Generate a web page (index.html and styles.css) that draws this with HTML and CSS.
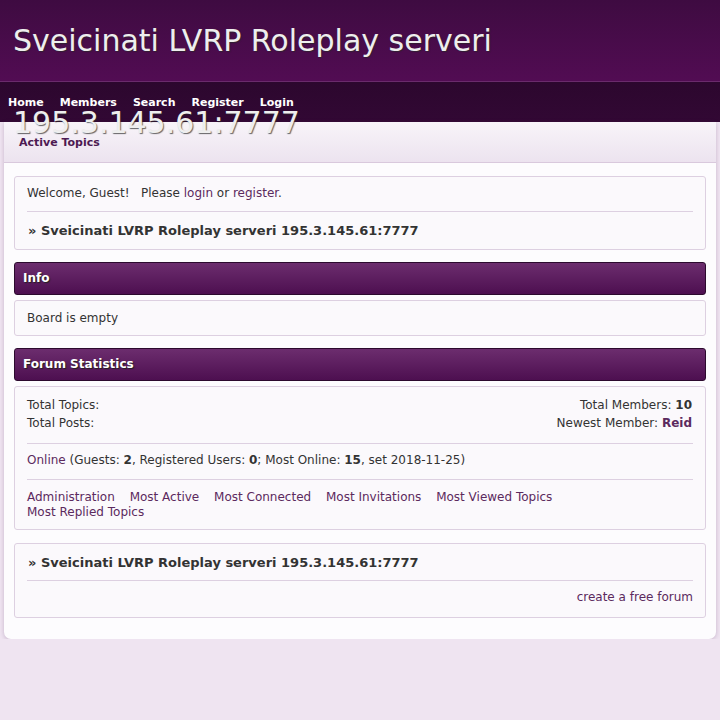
FILE: index.html
```html
<!DOCTYPE html>
<html>
<head>
<meta charset="utf-8">
<title>Sveicinati LVRP Roleplay serveri</title>
<link rel="stylesheet" href="styles.css">
</head>
<body>
<header class="site-header">
  <h1 class="site-title">Sveicinati LVRP Roleplay serveri 195.3.145.61:7777</h1>
</header>
<nav class="main-nav">
  <a href="#">Home</a>
  <a href="#">Members</a>
  <a href="#">Search</a>
  <a href="#">Register</a>
  <a href="#">Login</a>
</nav>
<div class="page">
  <div class="subnav"><a href="#">Active Topics</a></div>
  <div class="content">
    <section class="box welcome">
      <div class="row">Welcome, Guest!&nbsp;&nbsp; Please <a href="#">login</a> or <a href="#">register</a>.</div>
      <div class="row row-sep crumb">» Sveicinati LVRP Roleplay serveri 195.3.145.61:7777</div>
    </section>

    <h2 class="bar">Info</h2>
    <section class="box">
      <div class="row board">Board is empty</div>
    </section>

    <h2 class="bar">Forum Statistics</h2>
    <section class="box stats">
      <div class="stats-top">
        <div class="col">
          <div>Total Topics:</div>
          <div>Total Posts:</div>
        </div>
        <div class="col right">
          <div>Total Members: <b>10</b></div>
          <div>Newest Member: <a href="#" class="member">Reid</a></div>
        </div>
      </div>
      <div class="row row-sep online"><a href="#">Online</a> (Guests: <b>2</b>, Registered Users: <b>0</b>; Most Online: <b>15</b>, set 2018-11-25)</div>
      <div class="row row-sep links">
        <a href="#">Administration</a>
        <a href="#">Most Active</a>
        <a href="#">Most Connected</a>
        <a href="#">Most Invitations</a>
        <a href="#">Most Viewed Topics</a>
        <a href="#">Most Replied Topics</a>
      </div>
    </section>

    <section class="box footer-box">
      <div class="row crumb">» Sveicinati LVRP Roleplay serveri 195.3.145.61:7777</div>
      <div class="row row-sep right credit"><a href="#">create a free forum</a></div>
    </section>
  </div>
</div>
</body>
</html>
```
FILE: styles.css
```css
html, body {
  margin: 0;
  padding: 0;
}
body {
  background: #efe4f1;
  font-family: "DejaVu Sans", "Liberation Sans", sans-serif;
  font-size: 12px;
  color: #333;
}
a {
  color: #5c2a5e;
  text-decoration: none;
}
.site-header {
  height: 81px;
  background: linear-gradient(to bottom, #3e0b41, #520c53);
  border-bottom: 1px solid #6a2b6c;
}
.site-title {
  position: relative;
  z-index: 2;
  margin: 0;
  padding-left: 13px;
  font-size: 30px;
  line-height: 82px;
  font-weight: normal;
  color: #eeeeee;
  text-shadow: 1px 1px 1px rgba(40, 40, 40, 0.7);
}
.main-nav {
  height: 40px;
  background: linear-gradient(to bottom, #2c072e, #320834);
  display: flex;
  align-items: flex-start;
  padding-left: 8px;
  gap: 16px;
}
.main-nav a {
  color: #fff;
  font-weight: bold;
  font-size: 11px;
  line-height: 13px;
  margin-top: 14px;
}
.page {
  margin: 0 4px;
  background: #fdfcfe;
  border-radius: 0 0 7px 7px;
  box-shadow: 0 1px 4px rgba(80, 40, 90, 0.25);
  padding-bottom: 21px;
}
.subnav {
  height: 40px;
  background: linear-gradient(to bottom, #f8f4f9, #ece3ef);
  border-bottom: 1px solid #d9c9dd;
  padding-left: 15px;
}
.subnav a {
  display: inline-block;
  margin-top: 14px;
  font-weight: bold;
  font-size: 11px;
  line-height: 13px;
  color: #4d1a52;
}
.content {
  padding: 13px 10px 0;
}
.box {
  background: #fbf9fc;
  border: 1px solid #ddd0e1;
  border-radius: 3px;
  padding: 0 12px;
  margin-bottom: 12px;
}
.row {
  padding: 9px 0;
  line-height: 15px;
}
.row-sep {
  border-top: 1px solid #ddd0e1;
}
.welcome .row:first-child {
  padding-top: 9px;
  padding-bottom: 10px;
}
.crumb {
  font-weight: bold;
  font-size: 13px;
  color: #333;
  padding-left: 1px;
  padding-top: 11px;
  padding-bottom: 11px;
}
.board {
  padding-top: 10px;
  padding-bottom: 9px;
}
.bar {
  margin: 0 0 5px;
  height: 31px;
  line-height: 31px;
  padding-left: 8px;
  font-size: 12px;
  font-weight: bold;
  color: #fff;
  text-shadow: 1px 1px 1px #222;
  background: linear-gradient(to bottom, #6c2d6e, #4d0f50);
  border: 1px solid #2c0a2e;
  border-radius: 3px;
}
.stats-top {
  display: flex;
  justify-content: space-between;
  padding: 9px 1px 11px 0;
  line-height: 18px;
}
.right {
  text-align: right;
}
.member {
  font-weight: bold;
}
.online {
  padding-top: 9px;
  padding-bottom: 11px;
}
.links {
  padding-right: 120px;
  padding-top: 10px;
  padding-bottom: 9px;
}
.links a {
  margin-right: 11px;
}
.footer-box {
  margin-top: 13px;
  margin-bottom: 0;
}
.footer-box .crumb {
  padding-bottom: 10px;
}
.credit {
  padding-top: 9px;
  padding-bottom: 12px;
}
```
